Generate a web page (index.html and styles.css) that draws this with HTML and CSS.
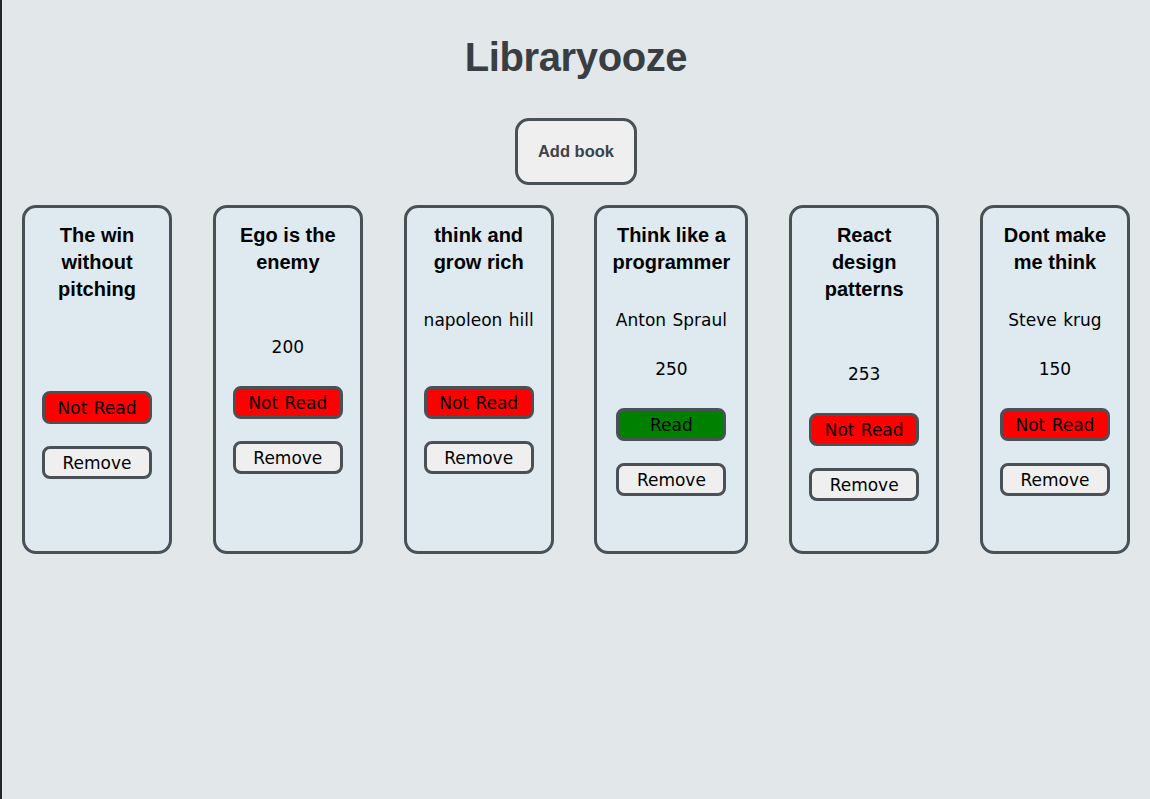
FILE: index.html
```html
<!DOCTYPE html>
<html lang="en">
<head>
<meta charset="utf-8">
<title>Libraryooze</title>
<link rel="stylesheet" href="styles.css">
</head>
<body>
<div class="page">
  <header class="header">
    <h1 class="logo">Libraryooze</h1>
    <button class="add-btn">Add book</button>
  </header>
  <main class="library">
    <div class="card">
      <h3 class="title">The win without pitching</h3>
      <p class="author"></p>
      <p class="pages"></p>
      <button class="status not-read">Not Read</button>
      <button class="remove">Remove</button>
    </div>
    <div class="card">
      <h3 class="title">Ego is the enemy</h3>
      <p class="author"></p>
      <p class="pages">200</p>
      <button class="status not-read">Not Read</button>
      <button class="remove">Remove</button>
    </div>
    <div class="card">
      <h3 class="title">think and grow rich</h3>
      <p class="author">napoleon hill</p>
      <p class="pages"></p>
      <button class="status not-read">Not Read</button>
      <button class="remove">Remove</button>
    </div>
    <div class="card">
      <h3 class="title">Think like a programmer</h3>
      <p class="author">Anton Spraul</p>
      <p class="pages">250</p>
      <button class="status read">Read</button>
      <button class="remove">Remove</button>
    </div>
    <div class="card">
      <h3 class="title">React design patterns</h3>
      <p class="author"></p>
      <p class="pages">253</p>
      <button class="status not-read">Not Read</button>
      <button class="remove">Remove</button>
    </div>
    <div class="card">
      <h3 class="title">Dont make me think</h3>
      <p class="author">Steve krug</p>
      <p class="pages">150</p>
      <button class="status not-read">Not Read</button>
      <button class="remove">Remove</button>
    </div>
  </main>
</div>
</body>
</html>
```

FILE: styles.css
```css
html, body {
  margin: 0;
  padding: 0;
}

body {
  background: #e2e7ea;
}

.page {
  min-height: 100vh;
  box-sizing: border-box;
  border-left: 2px solid #25282b;
  font-family: "Liberation Sans", Arial, sans-serif;
}

.header {
  display: flex;
  flex-direction: column;
  align-items: center;
}

.logo {
  margin: 34px 0 0;
  font-size: 40px;
  line-height: 46px;
  font-weight: bold;
  color: #393e43;
  letter-spacing: -0.4px;
}

.add-btn {
  margin-top: 38px;
  width: 122px;
  height: 67px;
  box-sizing: border-box;
  border: 3px solid #495056;
  border-radius: 14px;
  background: #efefef;
  color: #3c4247;
  font-family: "Liberation Sans", Arial, sans-serif;
  font-size: 16.5px;
  font-weight: 600;
  padding: 0;
}

.library {
  display: flex;
  justify-content: space-between;
  align-items: stretch;
  padding: 0 20px;
  margin-top: 20px;
}

.card {
  box-sizing: border-box;
  width: 150px;
  min-width: min-content;
  flex-shrink: 0;
  display: flex;
  flex-direction: column;
  align-items: center;
  padding: 14px 15px 50px;
  border: 3px solid #495056;
  border-radius: 14px;
  background: #deeaf0;
  text-align: center;
}

.title {
  margin: 0 0 19px;
  font-family: "Liberation Sans", Arial, sans-serif;
  font-size: 20px;
  line-height: 27px;
  font-weight: bold;
  color: #000;
}

.author,
.pages {
  margin: 13.5px 0;
  font-family: "DejaVu Sans", sans-serif;
  font-size: 17px;
  line-height: 22px;
  color: #000;
  word-spacing: 1px;
}

.status,
.remove {
  box-sizing: border-box;
  width: 110px;
  height: 33px;
  padding: 0;
  border: 3px solid #495056;
  border-radius: 8px;
  font-family: "DejaVu Sans", sans-serif;
  font-size: 17px;
  color: #000;
  word-spacing: 1px;
}

.status {
  margin-top: 15px;
}

.remove {
  margin-top: 22px;
  background: #efefef;
}

.not-read {
  background: #ff0000;
}

.read {
  background: #008000;
}
```
